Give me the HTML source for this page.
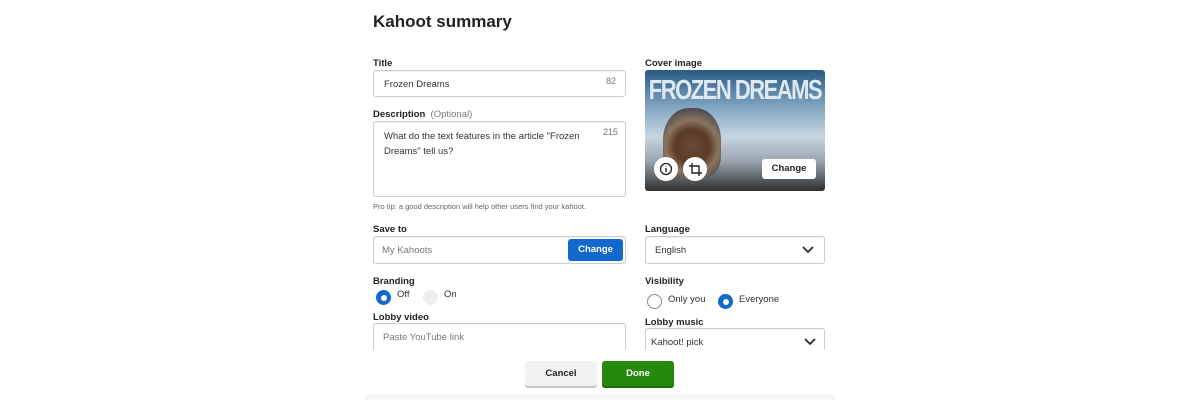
<!DOCTYPE html>
<html><head><style>
*{box-sizing:border-box;margin:0;padding:0}
body{width:1200px;height:400px;background:#fff;font-family:"Liberation Sans",sans-serif;color:#333;position:relative;overflow:hidden}
.a{position:absolute}
.lbl{font-size:9.5px;font-weight:bold;color:#222}
.inp{border:1px solid #ccc;border-radius:3px;background:#fff;box-shadow:inset 0 1px 1px rgba(0,0,0,.05)}
.t{font-size:9.5px;color:#333}
.ph{font-size:9.5px;color:#777}
.radio{width:15px;height:15px;border-radius:50%}
</style></head><body>
<div class="a" style="left:373px;top:12px;font-size:17px;font-weight:bold;color:#222">Kahoot summary</div>

<div class="a lbl" style="left:373px;top:58px">Title</div>
<div class="a inp" style="left:373px;top:70px;width:253px;height:27px"></div>
<div class="a t" style="left:384px;top:79px">Frozen Dreams</div>
<div class="a ph" style="left:606px;top:76px;font-size:9px">82</div>

<div class="a lbl" style="left:373px;top:109px">Description <span style="font-weight:normal;color:#777">&nbsp;(Optional)</span></div>
<div class="a inp" style="left:373px;top:121px;width:253px;height:76px"></div>
<div class="a t" style="left:384px;top:129px;line-height:15px;width:210px">What do the text features in the article "Frozen Dreams" tell us?</div>
<div class="a ph" style="left:603px;top:127px;font-size:9px">215</div>
<div class="a" style="left:373px;top:202px;font-size:7.5px;color:#666">Pro tip: a good description will help other users find your kahoot.</div>

<div class="a lbl" style="left:645px;top:58px">Cover image</div>
<div class="a" style="left:645px;top:70px;width:180px;height:121px;border-radius:3px;overflow:hidden;background:linear-gradient(180deg,#2a5a85 0%,#7fa3c0 30%,#c8d6e2 55%,#9aa6b0 75%,#2e2e2e 100%)">
 <div class="a" style="left:0;top:7px;width:180px;text-align:center;font-size:22px;font-weight:bold;color:#dfe9f2;letter-spacing:-1.5px;white-space:nowrap;transform:scaleY(1.25)">FROZEN DREAMS</div>
 <div class="a" style="left:18px;top:38px;width:58px;height:70px;border-radius:45% 45% 30% 30%;background:radial-gradient(circle at 50% 55%,#6b4a35 0,#5a3b28 35%,#8a7560 55%,#4a4a50 80%)"></div>
 <div class="a" style="left:9px;top:87px;width:24px;height:24px;border-radius:50%;background:#fff"><svg width="24" height="24"><circle cx="12" cy="12" r="5.5" stroke="#222" stroke-width="1.3" fill="none"/><path d="M12 11v4M12 9v0.5" stroke="#222" stroke-width="1.4"/></svg></div>
 <div class="a" style="left:38px;top:87px;width:24px;height:24px;border-radius:50%;background:#fff"><svg width="24" height="24"><path d="M9 6v10h10M6 9h10v10" stroke="#222" fill="none" stroke-width="1.4"/></svg></div>
 <div class="a" style="left:117px;top:89px;width:54px;height:20px;background:#fff;border-radius:3px;font-size:9.5px;font-weight:bold;text-align:center;line-height:20px;color:#222">Change</div>
</div>

<div class="a lbl" style="left:373px;top:224px">Save to</div>
<div class="a inp" style="left:373px;top:236px;width:253px;height:28px"></div>
<div class="a ph" style="left:382px;top:245px">My Kahoots</div>
<div class="a" style="left:568px;top:239px;width:55px;height:22px;background:#1368ce;border-radius:3px;color:#fff;font-size:9.5px;font-weight:bold;text-align:center;line-height:21px">Change</div>

<div class="a lbl" style="left:645px;top:224px">Language</div>
<div class="a inp" style="left:645px;top:236px;width:180px;height:28px"></div>
<div class="a t" style="left:655px;top:245px">English</div>
<svg class="a" style="left:802px;top:246px" width="12" height="8"><path d="M1 1l5 5 5-5" stroke="#222" stroke-width="1.6" fill="none"/></svg>

<div class="a lbl" style="left:373px;top:276px">Branding</div>
<div class="a radio" style="left:376px;top:290px;background:#1368ce"><div style="margin:4.5px;width:6px;height:6px;border-radius:50%;background:#fff"></div></div>
<div class="a t" style="left:397px;top:289px">Off</div>
<div class="a radio" style="left:423px;top:290px;background:#eee"></div>
<div class="a t" style="left:444px;top:289px">On</div>

<div class="a lbl" style="left:645px;top:276px">Visibility</div>
<div class="a radio" style="left:647px;top:294px;border:1px solid #888"></div>
<div class="a t" style="left:668px;top:294px">Only you</div>
<div class="a radio" style="left:718px;top:294px;background:#1368ce"><div style="margin:4.5px;width:6px;height:6px;border-radius:50%;background:#fff"></div></div>
<div class="a t" style="left:739px;top:294px">Everyone</div>

<div class="a lbl" style="left:373px;top:312px">Lobby video</div>
<div class="a inp" style="left:373px;top:323px;width:253px;height:30px"></div>
<div class="a ph" style="left:383px;top:332px">Paste YouTube link</div>

<div class="a lbl" style="left:645px;top:317px">Lobby music</div>
<div class="a inp" style="left:645px;top:328px;width:180px;height:28px"></div>
<div class="a t" style="left:651px;top:337px">Kahoot! pick</div>
<svg class="a" style="left:804px;top:338px" width="12" height="8"><path d="M1 1l5 5 5-5" stroke="#222" stroke-width="1.6" fill="none"/></svg>

<div class="a" style="left:0;top:350px;width:1200px;height:50px;background:#fff"></div>
<div class="a" style="left:365px;top:394px;width:470px;height:6px;background:#f7f7f7"></div>
<div class="a" style="left:525px;top:361px;width:72px;height:25px;background:#f2f2f2;border-radius:3px;box-shadow:0 2px 0 #c8c8c8;font-size:9.5px;font-weight:bold;text-align:center;line-height:25px;color:#222">Cancel</div>
<div class="a" style="left:602px;top:361px;width:72px;height:25px;background:#26890c;border-radius:3px;box-shadow:0 2px 0 #1c6b08;font-size:9.5px;font-weight:bold;text-align:center;line-height:25px;color:#fff">Done</div>
</body></html>
